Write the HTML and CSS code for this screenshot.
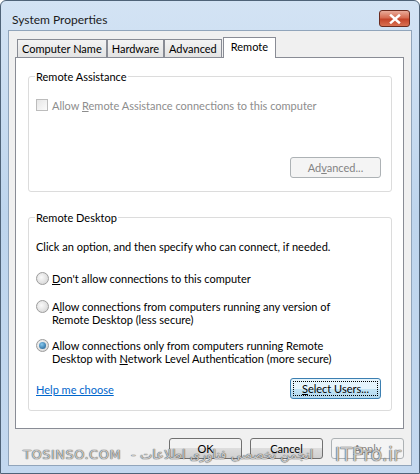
FILE: index.html
```html
<!DOCTYPE html>
<html lang="en">
<head>
  <meta charset="UTF-8">
  <title>System Properties</title>
  <link rel="stylesheet" href="styles.css">
</head>
<body>

  <div class="window">
    <div class="titlebar">
      <span class="title">System Properties</span>
      <span class="close">
        <svg width="14" height="10" viewBox="0 0 14 10">
          <path d="M3 1.5 L11 8.5 M11 1.5 L3 8.5" stroke="#fff" stroke-width="2.4" stroke-linecap="square"/>
        </svg>
      </span>
    </div>

    <div class="client">
      <div class="tabs">
        <div class="tab">Computer Name</div>
        <div class="tab">Hardware</div>
        <div class="tab">Advanced</div>
        <div class="tab active">Remote</div>
      </div>

      <div class="panel">
        <fieldset class="group assist">
          <legend>Remote Assistance</legend>
          <label class="check disabled">
            <span class="box"></span>
            <span>Allow <u>R</u>emote Assistance connections to this computer</span>
          </label>
          <div class="right">
            <button class="btn wide disabled">Ad<u>v</u>anced...</button>
          </div>
        </fieldset>

        <fieldset class="group desktop">
          <legend>Remote Desktop</legend>
          <p class="hint">Click an option, and then specify who can connect, if needed.</p>
          <label class="radio first">
            <span class="dot"></span>
            <span><u>D</u>on't allow connections to this computer</span>
          </label>
          <label class="radio">
            <span class="dot"></span>
            <span>A<u>l</u>low connections from computers running any version of<br>Remote Desktop (less secure)</span>
          </label>
          <label class="radio">
            <span class="dot on"></span>
            <span>Allow connections only from computers running Remote<br>Desktop with <u>N</u>etwork Level Authentication (more secure)</span>
          </label>
          <div class="footer">
            <a href="#" class="link">Help me choose</a>
            <button class="btn wide focus"><u>S</u>elect Users...</button>
          </div>
        </fieldset>
      </div>

      <div class="actions">
        <button class="btn">OK</button>
        <button class="btn">Cancel</button>
        <button class="btn disabled"><u>A</u>pply</button>
      </div>

      <!-- watermark of the site the screenshot came from -->
      <div class="watermark">
        <span class="wm-latin">TOSINSO.COM</span>
        <span class="wm-fa" dir="rtl">انجمن تخصصی فناوری اطلاعات -</span>
        <span class="wm-big">ITPro.ir</span>
      </div>
    </div>
  </div>

</body>
</html>
```

FILE: styles.css
```css
* {
  box-sizing: border-box;
}

body {
  margin: 0;
  font-family: Lato, 'Liberation Sans', sans-serif;
  font-size: 11px;
  line-height: 13px;
  color: #000;
  background: #fff;
}

.window {
  width: 420px;
  height: 474px;
  border: 1px solid #4f6378;
  border-radius: 6px 6px 0 0;
  background: linear-gradient(#d3e3f4, #bed5ed 45%, #c3d8ef);
  display: flex;
  flex-direction: column;
}

.titlebar {
  flex: none;
  height: 29px;
  display: flex;
  align-items: center;
  justify-content: space-between;
  padding: 0 9px 0 11px;
}

.title {
  font-size: 12px;
  color: #1b1b1b;
  margin-top: 8px;
}

.close {
  width: 31px;
  height: 17px;
  margin-top: 6px;
  border: 1px solid #6b2b1f;
  border-radius: 3px;
  background: linear-gradient(#e9ab9a, #d66c52 45%, #c4442a 55%, #d97152);
  display: flex;
  align-items: center;
  justify-content: center;
}

.client {
  position: relative;
  flex: 1;
  margin: 0 7px 7px 7px;
  background: #f0f0f0;
  border: 1px solid #91a5bb;
  padding: 6px 7px 0 6px;
}

.tabs {
  display: flex;
  align-items: flex-end;
  height: 20px;
  padding-left: 2px;
}

.tab {
  height: 18px;
  line-height: 17px;
  padding: 0 4px;
  border: 1px solid #898c95;
  border-bottom: none;
  background: linear-gradient(#f3f3f3, #e3e3e3);
  color: #000;
}

.tab.active {
  height: 21px;
  line-height: 17px;
  padding: 0 7px;
  margin-left: 1px;
  background: #fff;
  position: relative;
  top: 1px;
}

.panel {
  background: #fff;
  border: 1px solid #898c95;
  height: 372px;
  padding: 12px 11px 0 12px;
}

.group {
  border: 1px solid #dcdcdc;
  border-radius: 3px;
  margin: 0;
  padding: 0 10px 0 7px;
}

.group legend {
  padding: 0 1px;
  margin-left: -1px;
}

.assist {
  height: 122px;
}

.desktop {
  height: 200px;
  margin-top: 19px;
}

.check, .radio {
  display: flex;
  align-items: flex-start;
  gap: 3px;
}

.check {
  margin-top: 16px;
  gap: 4px;
}

.disabled {
  color: #8d8d8d;
}

.box {
  flex: none;
  width: 12px;
  height: 12px;
  border: 1px solid #bcbcbc;
  background: linear-gradient(135deg, #e6e6e6, #fbfbfb);
}

.right {
  display: flex;
  justify-content: flex-end;
  margin-top: 45px;
}

.btn {
  font-family: inherit;
  font-size: 11px;
  width: 73px;
  height: 21px;
  border: 1px solid #707070;
  border-radius: 3px;
  background: linear-gradient(#f2f2f2 50%, #dddddd 50%, #cfcfcf);
  color: #000;
  padding: 0;
}

.btn.wide {
  width: 91px;
}

.btn.disabled {
  border-color: #adb2b5;
  background: #f4f4f4;
  color: #838383;
}

.btn.focus {
  border-color: #3c7fb1;
  background: linear-gradient(#e5f4fc 50%, #c4e5f6 50%, #b2d8ef);
  outline: 1px dotted #000;
  outline-offset: -4px;
}

.hint {
  margin: 16px 0 0 0;
}

.radio.first {
  margin-top: 19px;
}

.radio + .radio {
  margin-top: 15px;
}

.radio + .radio + .radio {
  margin-top: 13px;
}

.dot {
  flex: none;
  width: 13px;
  height: 13px;
  border: 1px solid #9c9c9c;
  border-radius: 50%;
  background: radial-gradient(circle at 40% 40%, #fafafa, #cfcfcf);
  position: relative;
}

.dot.on::after {
  content: "";
  position: absolute;
  left: 2px;
  top: 2px;
  width: 7px;
  height: 7px;
  border-radius: 50%;
  background: radial-gradient(circle at 40% 35%, #86c8ee, #16558a);
}

.footer {
  display: flex;
  justify-content: space-between;
  align-items: center;
  margin-top: 13px;
}

.link {
  color: #0066cc;
  text-decoration: underline;
  margin-top: 2px;
}

.actions {
  display: flex;
  justify-content: flex-end;
  gap: 8px;
  margin-top: 9px;
}

.watermark {
  position: absolute;
  left: 14px;
  right: 10px;
  top: 417px;
  display: flex;
  align-items: center;
  gap: 10px;
  color: rgba(235, 235, 235, 0.8);
  text-shadow: 0 0 1px #444, 0 0 1px #444;
  pointer-events: none;
  white-space: nowrap;
}

.wm-latin {
  font-family: 'DejaVu Sans', sans-serif;
  font-size: 13px;
  letter-spacing: 0.5px;
}

.wm-fa {
  font-family: 'DejaVu Sans', sans-serif;
  font-size: 13px;
}

.wm-big {
  font-family: 'DejaVu Sans', sans-serif;
  font-size: 19px;
  margin-left: auto;
}
```
